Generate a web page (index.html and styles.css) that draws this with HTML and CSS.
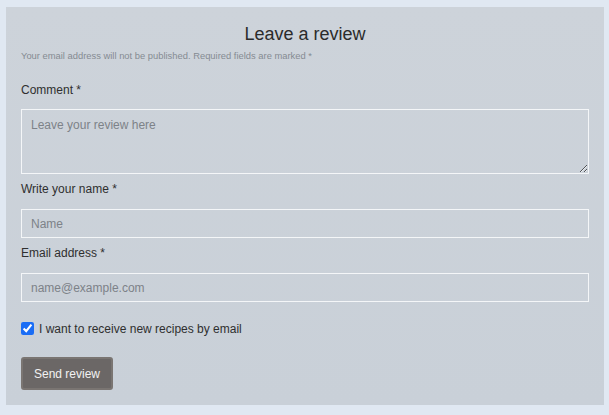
FILE: index.html
```html
<!DOCTYPE html>
<html>
<head>
<meta charset="utf-8">
<link rel="stylesheet" href="styles.css">
</head>
<body>
<div class="page">
  <form class="card">
    <h2 class="title">Leave a review</h2>
    <p class="note">Your email address will not be published. Required fields are marked *</p>
    <label class="label label-first">Comment *</label>
    <textarea class="field area" placeholder="Leave your review here"></textarea>
    <label class="label">Write your name *</label>
    <input class="field input" type="text" placeholder="Name">
    <label class="label">Email address *</label>
    <input class="field input" type="email" placeholder="name@example.com">
    <div class="check-row">
      <input class="check" type="checkbox" checked>
      <span class="check-label">I want to receive new recipes by email</span>
    </div>
    <div><button class="btn" type="button">Send review</button></div>
  </form>
</div>
</body>
</html>
```
FILE: styles.css
```css
html, body {
  margin: 0;
  padding: 0;
  background: #e0e8f2;
  font-family: "Liberation Sans", Arial, sans-serif;
}
.page {
  padding: 7px 5px 10px 6px;
}
.card {
  box-sizing: border-box;
  height: 398px;
  background: linear-gradient(#cdd3da, #c9d0d8);
  padding: 16px 15px 0 15px;
  display: flex;
  flex-direction: column;
  margin: 0;
}
.title {
  margin: 0;
  font-size: 18px;
  line-height: 22px;
  font-weight: normal;
  text-align: center;
  color: #2b2b2b;
}
.note {
  margin: 5px 0 0 0;
  font-size: 9.4px;
  line-height: 11px;
  color: #858b92;
}
.label {
  display: block;
  font-size: 12px;
  line-height: 14px;
  color: #2f2f2f;
  margin-top: 8px;
  margin-bottom: 13px;
}
.label-first {
  margin-top: 22px;
  margin-bottom: 12px;
}
.field {
  box-sizing: border-box;
  width: 100%;
  border: 1px solid #f4f6f8;
  background: transparent;
  font-family: "Liberation Sans", Arial, sans-serif;
  font-size: 12px;
  color: #333;
  padding: 0 9px;
  margin: 0;
  outline: none;
}
.field::placeholder {
  color: #7d8288;
}
.area {
  height: 65px;
  padding-top: 8px;
  resize: vertical;
  display: block;
}
.input {
  height: 29px;
  display: block;
}
.check-row {
  display: flex;
  align-items: center;
  margin-top: 20px;
  height: 13px;
}
.check {
  width: 13px;
  height: 13px;
  margin: 0 5px 0 0;
  accent-color: #1a6df5;
}
.check-label {
  font-size: 12px;
  color: #2f2f2f;
}
.btn {
  margin-top: 22px;
  width: 92px;
  height: 33px;
  background: #6b6766;
  border: 2px solid #7a7572;
  border-radius: 3px;
  color: #f2f2f2;
  font-family: "Liberation Sans", Arial, sans-serif;
  font-size: 12px;
  padding: 0;
}
```
